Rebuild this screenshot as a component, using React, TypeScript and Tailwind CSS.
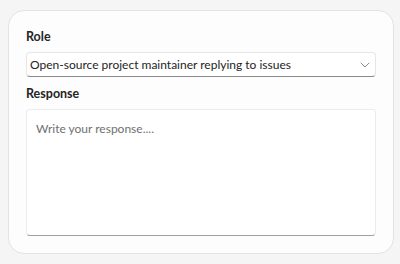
import { ChevronDown } from "lucide-react";

const App = () => {
  return (
    <div
      className="w-[400px] h-[264px] bg-[#f5f5f5] pt-[10px] pl-2"
      style={{ fontFamily: 'Lato, "Open Sans", sans-serif' }}
    >
      <div className="w-[386px] h-[244px] rounded-2xl border border-[#e3e3e3] bg-[#fdfdfd] px-[17px] pt-[16px] flex flex-col">
        {/* Role */}
        <label className="text-[12.5px] leading-5 font-bold text-[#242424] mb-[5px]">Role</label>
        <div className="h-[25px] rounded border border-[#e6e6e6] border-b-[#8a8a8a] bg-white flex items-center pl-[3px] pr-[2px]">
          <span className="text-[12px] text-[#242424] leading-5">
            Open-source project maintainer replying to issues
          </span>
          <ChevronDown className="ml-auto w-4 h-4 text-[#757575]" strokeWidth={1.25} />
        </div>

        {/* Response */}
        <label className="text-[12.5px] leading-5 font-bold text-[#242424] mt-[7px] mb-[5px]">Response</label>
        <div className="h-[127px] rounded border border-[#ececec] border-b-[#a0a0a0] bg-white px-[9px] pt-[5px]">
          <span className="text-[12px] leading-5 text-[#707070]">Write your response....</span>
        </div>
      </div>
    </div>
  );
};

export default App;
